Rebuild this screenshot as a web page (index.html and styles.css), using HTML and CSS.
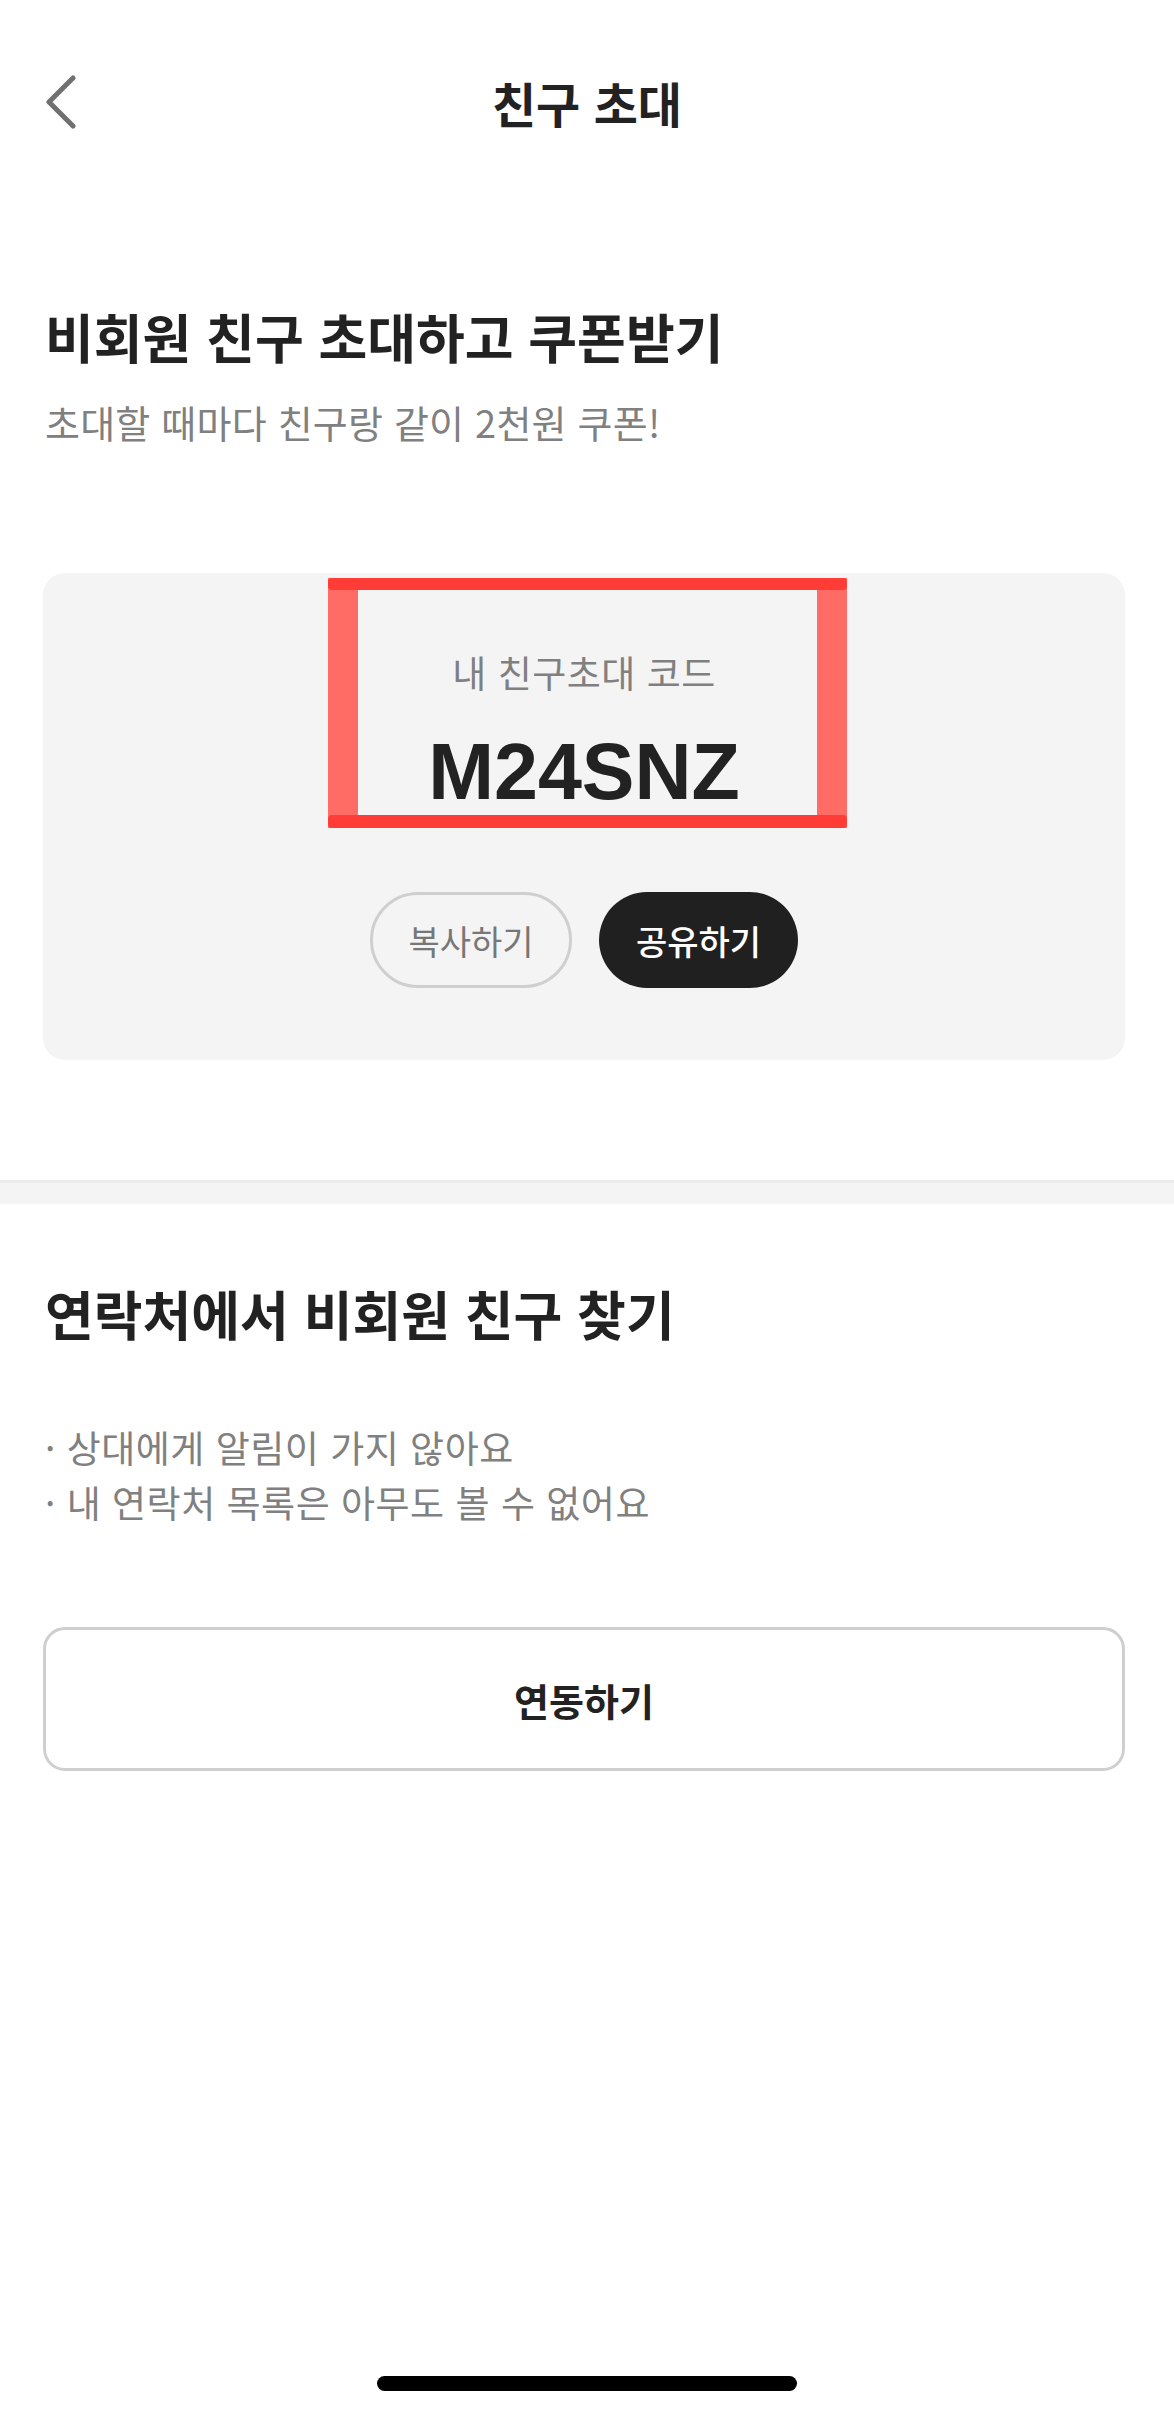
FILE: index.html
```html
<!DOCTYPE html>
<html lang="ko">
<head>
<meta charset="utf-8">
<title>친구 초대</title>
<link rel="stylesheet" href="styles.css">
</head>
<body>
<div class="screen">
  <header class="topbar">
    <button class="back" aria-label="뒤로">
      <svg width="30" height="54" viewBox="0 0 30 54" fill="none"><path d="M27 3 L3 27 L27 51" stroke="#707070" stroke-width="5" stroke-linecap="round" stroke-linejoin="round"/></svg>
    </button>
    <h1 class="title">친구 초대</h1>
    <span class="spacer"></span>
  </header>

  <section class="invite">
    <h2 class="heading">비회원 친구 초대하고 쿠폰받기</h2>
    <p class="sub">초대할 때마다 친구랑 같이 2천원 쿠폰!</p>

    <div class="code-card">
      <p class="code-label">내 친구초대 코드</p>
      <p class="code">M24SNZ</p>
      <div class="actions">
        <button class="pill pill-outline">복사하기</button>
        <button class="pill pill-dark">공유하기</button>
      </div>
      <span class="highlight"></span>
    </div>
  </section>

  <div class="divider"></div>

  <section class="contacts">
    <h2 class="heading">연락처에서 비회원 친구 찾기</h2>
    <ul class="notes">
      <li>· 상대에게 알림이 가지 않아요</li>
      <li>· 내 연락처 목록은 아무도 볼 수 없어요</li>
    </ul>
    <button class="link-btn">연동하기</button>
  </section>

  <div class="home-indicator"></div>
</div>
</body>
</html>
```

FILE: styles.css
```css
* { box-sizing: border-box; }

body {
  margin: 0;
  background: #ffffff;
  font-family: "Noto Sans CJK KR", "Noto Sans", sans-serif;
  color: #222222;
}

.screen {
  width: 1174px;
  min-height: 2415px;
  display: flex;
  flex-direction: column;
}

/* top bar */
.topbar {
  height: 204px;
  padding: 0 46px;
  display: grid;
  grid-template-columns: 1fr auto 1fr;
  align-items: center;
}

.back {
  justify-self: start;
  width: 30px;
  height: 54px;
  padding: 0;
  border: 0;
  background: none;
  display: flex;
}

.title {
  margin: 0;
  font-size: 48px;
  line-height: 60px;
  font-weight: 700;
  letter-spacing: 0;
  color: #222222;
}

/* sections */
.invite {
  padding: 98px 49px 120px 43px;
}

.heading {
  margin: 0;
  padding-left: 2px;
  font-size: 53px;
  line-height: 68px;
  font-weight: 700;
  letter-spacing: 0;
  color: #222222;
}

.sub {
  margin: 27px 0 0;
  padding-left: 2px;
  font-size: 38px;
  line-height: 50px;
  letter-spacing: 0.2px;
  color: #808080;
}

.code-card {
  position: relative;
  margin-top: 126px;
  padding: 76px 0 72px;
  background: #f4f4f4;
  border-radius: 22px;
  display: flex;
  flex-direction: column;
  align-items: center;
}

.code-label {
  margin: 0;
  font-size: 37px;
  line-height: 46px;
  letter-spacing: 0.5px;
  color: #808080;
}

.code {
  margin: 32px 0 0;
  font-family: "Liberation Sans", Arial, sans-serif;
  font-size: 79px;
  line-height: 90px;
  font-weight: 700;
  color: #222222;
}

.actions {
  margin-top: 75px;
  display: flex;
  gap: 27px;
}

.pill {
  height: 96px;
  border-radius: 48px;
  font-family: "Noto Sans CJK KR", sans-serif;
  font-size: 34px;
  letter-spacing: 0;
  padding: 0;
  display: flex;
  align-items: center;
  justify-content: center;
}

.pill-outline {
  width: 202px;
  background: transparent;
  border: 3px solid #cfcfcf;
  color: #777777;
}

.pill-dark {
  width: 199px;
  background: #202020;
  border: 0;
  color: #ffffff;
  font-weight: 500;
}

/* annotation box drawn over the code */
.highlight {
  position: absolute;
  left: 285px;
  top: 5px;
  width: 519px;
  height: 250px;
  border-left: 30px solid #ff6c66;
  border-right: 30px solid #ff6c66;
  pointer-events: none;
}

.highlight::before,
.highlight::after {
  content: "";
  position: absolute;
  left: -30px;
  right: -30px;
  height: 12px;
  background: #ff3d36;
  border-radius: 4px;
}

.highlight::before { top: 0; }
.highlight::after { bottom: 0; height: 13px; }

.divider {
  height: 24px;
  background: #f4f4f4;
  border-top: 3px solid #ebebeb;
}

.contacts {
  padding: 75px 49px 0 43px;
}

.notes {
  list-style: none;
  margin: 73px 0 0;
  padding: 0 0 0 2px;
  font-size: 37px;
  line-height: 55px;
  letter-spacing: 0.5px;
  color: #808080;
}

.notes li { margin: 0; }

.link-btn {
  display: block;
  width: 100%;
  height: 144px;
  margin-top: 97px;
  background: #ffffff;
  border: 3px solid #cfcfcf;
  border-radius: 22px;
  font-family: "Noto Sans CJK KR", sans-serif;
  font-size: 38px;
  font-weight: 700;
  letter-spacing: 0;
  color: #222222;
}

.home-indicator {
  align-self: center;
  margin-top: auto;
  margin-bottom: 24px;
  width: 420px;
  height: 15px;
  border-radius: 8px;
  background: #000000;
}
```
